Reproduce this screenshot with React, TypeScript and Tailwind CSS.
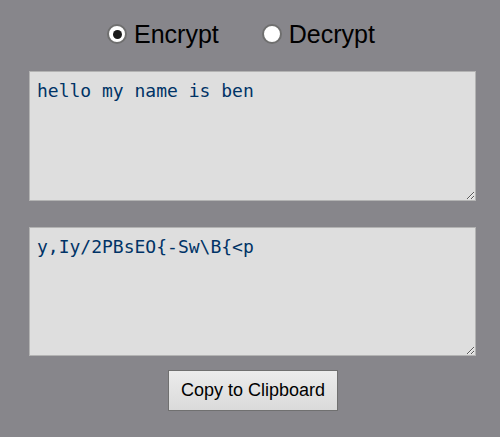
const Radio = ({ checked, label }: { checked: boolean; label: string }) => (
  <label className="flex items-center cursor-pointer">
    <span className="w-[20px] h-[20px] rounded-full bg-white border-2 border-[#6f6f6f] flex items-center justify-center">
      {checked && <span className="w-[9px] h-[9px] rounded-full bg-[#1a1a1a]" />}
    </span>
    <span className="ml-[7px] text-[25px] leading-none text-black">{label}</span>
  </label>
);

export default function App() {
  const textareaClass =
    "block w-[447px] bg-[#dedede] border border-[#b3b3b3] px-[7px] py-[8px] text-[18px] leading-[22px] text-[#003366] outline-none";
  return (
    <div
      className="min-h-screen bg-[#87868b] flex flex-col items-start pl-[29px] pt-[21px]"
      style={{ fontFamily: '"Liberation Sans", Arial, sans-serif' }}
    >
      <div className="flex items-center gap-[43px] ml-[78px] h-[26px]">
        <Radio checked label="Encrypt" />
        <Radio checked={false} label="Decrypt" />
      </div>
      <textarea
        className={`${textareaClass} mt-[24px] h-[130px]`}
        style={{ fontFamily: '"DejaVu Sans Mono", monospace' }}
        defaultValue="hello my name is ben"
      />
      <textarea
        className={`${textareaClass} mt-[26px] h-[129px]`}
        style={{ fontFamily: '"DejaVu Sans Mono", monospace' }}
        readOnly
        defaultValue="y,Iy/2PBsEO{-Sw\B{<p"
      />
      <button className="ml-[139px] mt-[14px] w-[170px] h-[41px] border border-[#707070] bg-gradient-to-b from-[#ececec] to-[#dadada] text-[18px] text-black">
        Copy to Clipboard
      </button>
    </div>
  );
}
